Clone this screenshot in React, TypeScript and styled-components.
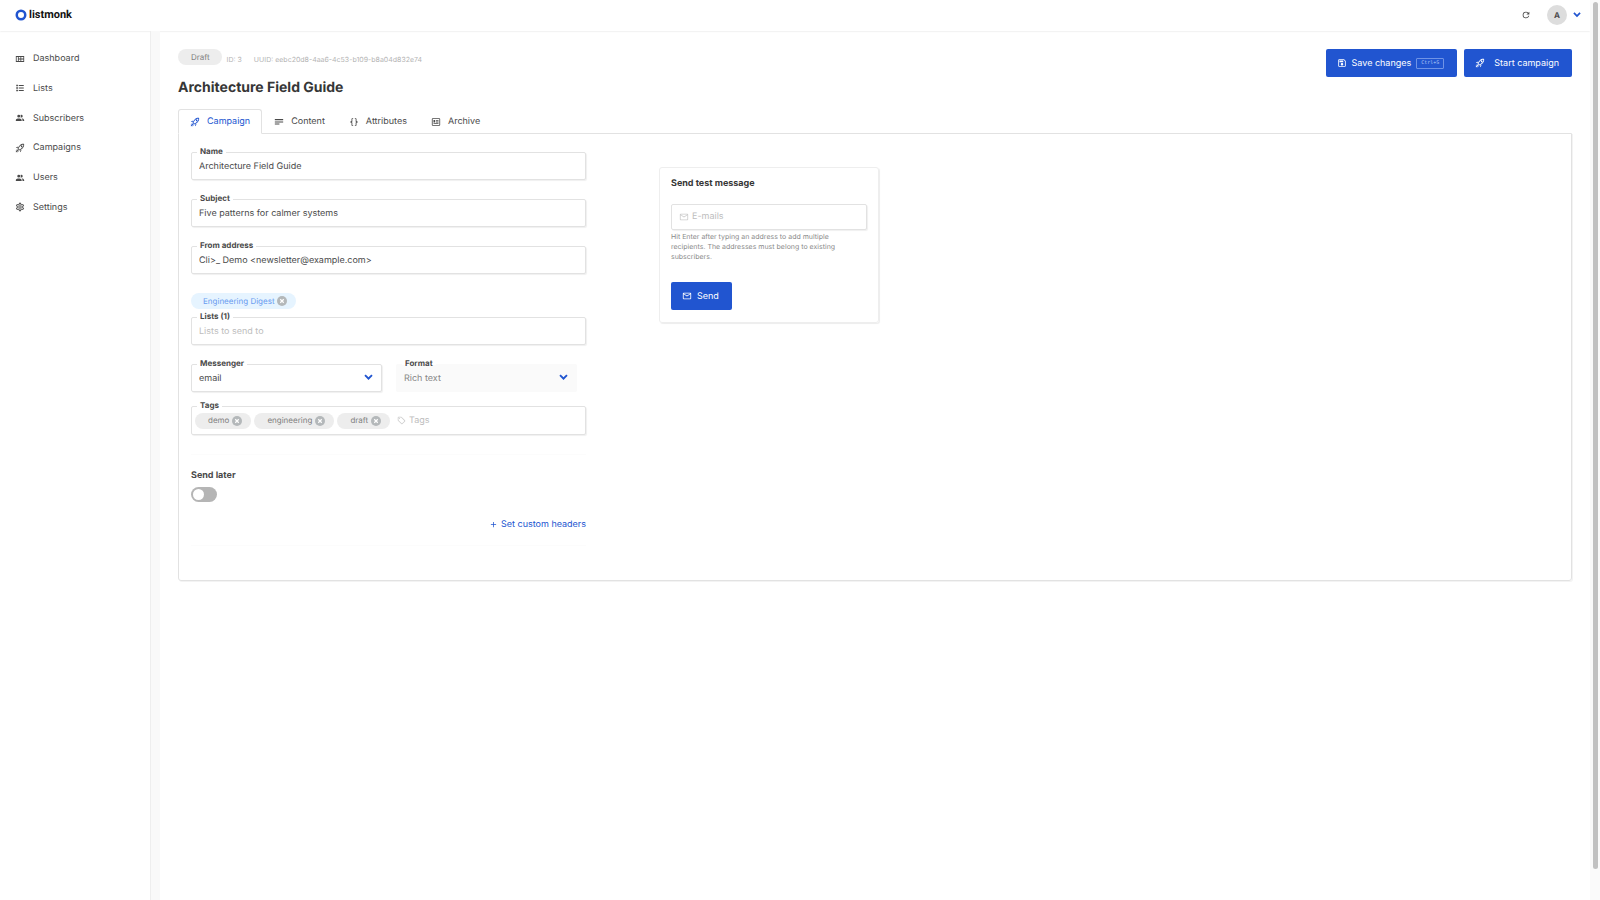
import React from 'react';
import styled, { createGlobalStyle, css } from 'styled-components';

const ICONS = {
  rocket:
    'M13.13 22.19L11.5 18.36C13.07 17.78 14.54 17 15.9 16.09L13.13 22.19M5.64 12.5L1.81 10.87L7.91 8.1C7 9.46 6.22 10.93 5.64 12.5M19.22 4C19.5 4 19.75 4 19.96 4.05C20.13 5.44 19.94 8.3 16.66 11.58C14.96 13.29 12.93 14.6 10.65 15.47L8.5 13.37C9.42 11.06 10.73 9.03 12.42 7.34C15.18 4.58 17.64 4 19.22 4M19.22 2C17.24 2 14.24 2.69 11 5.93C8.81 8.12 7.5 10.53 6.65 12.64C6.37 13.39 6.56 14.21 7.11 14.77L9.24 16.89C9.62 17.27 10.13 17.5 10.66 17.5C10.89 17.5 11.13 17.44 11.36 17.35C13.5 16.53 15.88 15.19 18.07 13C23.73 7.34 21.61 2.39 21.61 2.39S20.7 2 19.22 2M14.54 9.46C13.76 8.68 13.76 7.41 14.54 6.63S16.59 5.85 17.37 6.63C18.14 7.41 18.15 8.68 17.37 9.46C16.59 10.24 15.32 10.24 14.54 9.46M6.24 22L9.88 18.36C9.54 18.27 9.21 18.12 8.91 17.91L4.83 22H6.24M2 22H3.41L8.18 17.24L6.76 15.83L2 20.59V22M2 19.17L6.09 15.09C5.88 14.79 5.73 14.47 5.64 14.12L2 17.76V19.17Z',
  dashboard: 'M2 5v14h20V5H2zm5 12H4V7h3v10zm6 0H9v-4h4v4zm0-6H9V7h4v4zm7 6h-5v-4h5v4zm0-6h-5V7h5v4z',
  list: 'M3 4h4v4H3V4m6 1v2h12V5H9m-6 5h4v4H3v-4m6 1v2h12v-2H9m-6 5h4v4H3v-4m6 1v2h12v-2H9',
  people:
    'M16 17V19H2V17S2 13 9 13 16 17 16 17M12.5 7.5A3.5 3.5 0 1 0 9 11A3.5 3.5 0 0 0 12.5 7.5M15.94 13A5.32 5.32 0 0 1 18 17V19H22V17S22 13.37 15.94 13M15 4A3.39 3.39 0 0 0 13.07 4.59A5 5 0 0 1 13.07 10.41A3.39 3.39 0 0 0 15 11A3.5 3.5 0 0 0 15 4Z',
  cog:
    'M12,8A4,4 0 0,1 16,12A4,4 0 0,1 12,16A4,4 0 0,1 8,12A4,4 0 0,1 12,8M12,10A2,2 0 0,0 10,12A2,2 0 0,0 12,14A2,2 0 0,0 14,12A2,2 0 0,0 12,10M10,22C9.75,22 9.54,21.82 9.5,21.58L9.13,18.93C8.5,18.68 7.96,18.34 7.44,17.94L4.95,18.95C4.73,19.03 4.46,18.95 4.34,18.73L2.34,15.27C2.21,15.05 2.27,14.78 2.46,14.63L4.57,12.97L4.5,12L4.57,11L2.46,9.37C2.27,9.22 2.21,8.95 2.34,8.73L4.34,5.27C4.46,5.05 4.73,4.96 4.95,5.05L7.44,6.05C7.96,5.66 8.5,5.32 9.13,5.07L9.5,2.42C9.54,2.18 9.75,2 10,2H14C14.25,2 14.46,2.18 14.5,2.42L14.87,5.07C15.5,5.32 16.04,5.66 16.56,6.05L19.05,5.05C19.27,4.96 19.54,5.05 19.66,5.27L21.66,8.73C21.79,8.95 21.73,9.22 21.54,9.37L19.43,11L19.5,12L19.43,13L21.54,14.63C21.73,14.78 21.79,15.05 21.66,15.27L19.66,18.73C19.54,18.95 19.27,19.04 19.05,18.95L16.56,17.95C16.04,18.34 15.5,18.68 14.87,18.93L14.5,21.58C14.46,21.82 14.25,22 14,22H10M11.25,4L10.88,6.61C9.68,6.86 8.62,7.5 7.85,8.39L5.44,7.35L4.69,8.65L6.8,10.2C6.4,11.37 6.4,12.64 6.8,13.8L4.68,15.36L5.43,16.66L7.86,15.62C8.63,16.5 9.68,17.14 10.87,17.38L11.24,20H12.76L13.13,17.39C14.32,17.14 15.37,16.5 16.14,15.62L18.57,16.66L19.32,15.36L17.2,13.81C17.6,12.64 17.6,11.37 17.2,10.2L19.31,8.65L18.56,7.35L16.15,8.39C15.38,7.5 14.32,6.86 13.12,6.62L12.75,4H11.25Z',
  text: 'M2 5H22V8H2V5M2 10.5H22V13H2V10.5M2 15.5H13V18H2V15.5Z',
  braces:
    'M8 3A2 2 0 0 0 6 5V9A2 2 0 0 1 4 11H3V13H4A2 2 0 0 1 6 15V19A2 2 0 0 0 8 21H10V19H8V14A2 2 0 0 0 6 12A2 2 0 0 0 8 10V5H10V3M16 3A2 2 0 0 1 18 5V9A2 2 0 0 0 20 11H21V13H20A2 2 0 0 0 18 15V19A2 2 0 0 1 16 21H14V19H16V14A2 2 0 0 1 18 12A2 2 0 0 1 16 10V5H14V3H16Z',
  news:
    'M20 5V19H4V5H20M20 3H4C2.89 3 2 3.89 2 5V19C2 20.11 2.89 21 4 21H20C21.11 21 22 20.11 22 19V5C22 3.89 21.11 3 20 3M18 15H6V17H18V15M10 7H6V13H10V7M12 9H18V7H12V9M18 11H12V13H18V11Z',
  save:
    'M17 3H5C3.89 3 3 3.9 3 5V19C3 20.1 3.89 21 5 21H19C20.1 21 21 20.1 21 19V7L17 3M19 19H5V5H16.17L19 7.83V19M12 12C10.34 12 9 13.34 9 15S10.34 18 12 18 15 16.66 15 15 13.66 12 12 12M6 6H15V10H6V6Z',
  refresh:
    'M17.65 6.35C16.2 4.9 14.21 4 12 4A8 8 0 0 0 4 12A8 8 0 0 0 12 20C15.73 20 18.84 17.45 19.73 14H17.65C16.83 16.33 14.61 18 12 18A6 6 0 0 1 6 12A6 6 0 0 1 12 6C13.66 6 15.14 6.69 16.22 7.78L13 11H20V4L17.65 6.35Z',
  mail:
    'M22 6C22 4.9 21.1 4 20 4H4C2.9 4 2 4.9 2 6V18C2 19.1 2.9 20 4 20H20C21.1 20 22 19.1 22 18V6M20 6L12 11L4 6H20M20 18H4V8L12 13L20 8V18Z',
  tag:
    'M21.41 11.58L12.41 2.58A2 2 0 0 0 11 2H4A2 2 0 0 0 2 4V11A2 2 0 0 0 2.59 12.42L11.59 21.42A2 2 0 0 0 13 22A2 2 0 0 0 14.41 21.41L21.41 14.41A2 2 0 0 0 22 13A2 2 0 0 0 21.41 11.58M13 20L4 11V4H11L20 13M6.5 5A1.5 1.5 0 1 1 5 6.5A1.5 1.5 0 0 1 6.5 5Z',
  plus: 'M19 13H13V19H11V13H5V11H11V5H13V11H19V13Z',
  chevron: 'M1 7.5L4.5 4L12 11L19.5 4L23 7.5L12 18.5Z',
};

type IconName = keyof typeof ICONS;

const Svg = styled.svg<{ $size: number }>`
  width: ${(p) => p.$size}px;
  height: ${(p) => p.$size}px;
  flex: none;
  display: block;
  fill: currentColor;
`;

const Icon = ({ name, size = 10 }: { name: IconName; size?: number }) => (
  <Svg $size={size} viewBox="0 0 24 24" aria-hidden="true">
    <path d={ICONS[name]} />
  </Svg>
);

const BLUE = '#2155d0';
const BORDER = '#e2e2e2';

const GlobalStyle = createGlobalStyle`
  *, *::before, *::after { box-sizing: border-box; }
  body {
    margin: 0;
    background: #fff;
    color: #4a4a4a;
    font: 9px/15px Inter, "Liberation Sans", sans-serif;
    text-rendering: geometricPrecision;
  }
  button, input, select { font: inherit; color: inherit; text-rendering: inherit; }
  button { cursor: pointer; }
  a { color: inherit; text-decoration: none; }
`;

const Page = styled.div`
  display: grid;
  grid-template-columns: 1fr 10px;
  min-height: 100vh;
`;

const Shell = styled.div`
  display: flex;
  flex-direction: column;
`;

const Gutter = styled.div`
  display: flex;
  justify-content: center;
  padding-top: 2px;
  background: #fafafa;
`;

const Thumb = styled.div`
  width: 5px;
  height: calc(100vh - 33px);
  border-radius: 3px;
  background: #c1c1c1;
`;

const Header = styled.header`
  display: flex;
  align-items: center;
  justify-content: space-between;
  height: 31px;
  padding: 0 9px 1px 15px;
  box-shadow: 0 0 2px #d8d8d8;
`;

const Logo = styled.a`
  display: flex;
  align-items: center;
  gap: 2px;
  color: #111;
  font: 700 11px/16px Roboto, sans-serif;
`;

const HeaderTools = styled.div`
  display: flex;
  align-items: center;
`;

const PlainButton = styled.button`
  display: flex;
  align-items: center;
  padding: 0;
  border: 0;
  background: none;
`;

const UserButton = styled(PlainButton)`
  gap: 6px;
  margin-left: 16px;
  color: ${BLUE};
`;

const Avatar = styled.span`
  width: 20px;
  height: 20px;
  border-radius: 50%;
  background: #ddd;
  color: #4a4a4a;
  font-size: 8px;
  line-height: 20px;
  font-weight: 700;
  text-align: center;
`;

const Body = styled.div`
  display: flex;
  flex: 1;
`;

const Sidebar = styled.nav`
  width: 151px;
  flex: none;
  padding: 20px 15px;
  border-right: 1px solid #eee;
`;

const NavList = styled.div`
  display: flex;
  flex-direction: column;
  justify-content: space-between;
  height: 164px;
`;

const Strip = styled.div`
  width: 9px;
  flex: none;
  background: #f9f9f9;
`;

const NavLink = styled.a`
  display: flex;
  align-items: center;
  gap: 8px;
`;

const Main = styled.main`
  flex: 1;
  min-width: 0;
  padding: 18px;
`;

const TitleBar = styled.div`
  display: flex;
  justify-content: space-between;
  align-items: flex-start;
`;

const Meta = styled.p`
  display: flex;
  align-items: flex-start;
  height: 16px;
  margin: 0;
  color: #b5b5b5;
  font-size: 7px;
`;

const MetaItem = styled.span`
  margin: 3px 12px 0 0;
`;

const Status = styled.span`
  margin-right: 5px;
  padding: 0 12px 0 13px;
  border-radius: 8px;
  background: #ededed;
  color: #7f7f7f;
  font-size: 8px;
  line-height: 16px;
`;

const Title = styled.h1`
  margin: 12px 0 11px;
  color: #363636;
  font-size: 14px;
  line-height: 21px;
`;

const Actions = styled.div`
  display: flex;
  gap: 7px;
`;

const Button = styled.button<{ $gap?: number }>`
  display: flex;
  align-items: center;
  gap: ${(p) => p.$gap ?? 5}px;
  height: 28px;
  padding: 0 13px 0 11px;
  border: 0;
  border-radius: 2px;
  background: ${BLUE};
  color: #fff;
`;

const Kbd = styled.kbd`
  padding: 0 4px;
  border: 1px solid #6f93e6;
  border-radius: 1px;
  color: #b4c7f4;
  font: 5px/9px "DejaVu Sans Mono", monospace;
`;

const Tabs = styled.div`
  display: flex;
`;

const Tab = styled.button<{ $active?: boolean }>`
  display: flex;
  align-items: center;
  gap: 7px;
  height: 25px;
  margin-bottom: -1px;
  padding: 0 11px;
  border: 1px solid transparent;
  border-radius: 3px 3px 0 0;
  background: none;
  ${(p) =>
    p.$active &&
    css`
      border-color: ${BORDER};
      border-bottom-color: #fff;
      background: #fff;
      color: ${BLUE};
      z-index: 1;
    `}
`;

const Panel = styled.section`
  display: flex;
  align-items: flex-start;
  gap: 73px;
  padding: 18px 12px 34px;
  border: 1px solid ${BORDER};
  border-radius: 0 0 3px 3px;
  box-shadow: 1px 1px 0 #f3f3f3;
`;

const Form = styled.form`
  flex: 0 1 395px;
`;

const Field = styled.div<{ $gap?: number }>`
  position: relative;
  margin-bottom: ${(p) => p.$gap ?? 19}px;
`;

const FieldLabel = styled.label`
  position: absolute;
  z-index: 1;
  top: -7px;
  left: 6px;
  padding: 0 3px;
  background: linear-gradient(transparent 7px, #fff 7px 8px, transparent 8px);
  font-size: 8px;
  line-height: 13px;
  font-weight: 700;
`;

const control = css`
  width: 100%;
  height: 28px;
  border: 1px solid ${BORDER};
  border-radius: 2px;
  background: #fff;
  box-shadow: 1px 1px 1px #f0f0f0;
`;

const Input = styled.input`
  ${control}
  display: block;
  padding: 0 7px;
  &::placeholder { color: #bdbdbd; }
`;

const Pair = styled.div`
  display: grid;
  grid-template-columns: 191px 181px;
  gap: 14px;
`;

const SelectBox = styled.div`
  position: relative;
`;

const Select = styled.select`
  ${control}
  display: block;
  appearance: none;
  padding: 0 7px;
  opacity: 1;
  &:disabled {
    border-color: #fafafa;
    background: #fafafa;
    color: #888;
    box-shadow: none;
  }
`;

const Arrow = styled.span`
  position: absolute;
  top: 9px;
  right: 9px;
  color: ${BLUE};
  pointer-events: none;
`;

const Chips = styled.div`
  display: flex;
  margin: 0 0 8px;
`;

const Chip = styled.span<{ $blue?: boolean }>`
  display: flex;
  align-items: center;
  gap: ${(p) => (p.$blue ? 2 : 3)}px;
  height: 16px;
  padding: 0 9px 0 ${(p) => (p.$blue ? 12 : 13)}px;
  border-radius: 8px;
  background: ${(p) => (p.$blue ? '#e6f4ff' : '#ededed')};
  color: ${(p) => (p.$blue ? '#6a9cf0' : '#7f7f7f')};
  font-size: 8px;
  white-space: nowrap;
`;

const TagBox = styled.div`
  ${control}
  height: 29px;
  display: flex;
  align-items: center;
  gap: 3px;
  padding: 0 3px;
`;

const TagInput = styled.input`
  flex: 1;
  min-width: 0;
  padding: 0;
  border: 0;
  outline: 0;
  background: none;
  &::placeholder { color: #bdbdbd; }
`;

const Hint = styled.span`
  display: flex;
  padding-left: 4px;
  color: #ccc;
`;

const Rule = styled.hr`
  height: 1px;
  margin: 0;
  border: 0;
  background: #fcfcfc;
`;

const SendLater = styled.div`
  display: flex;
  flex-direction: column;
  align-items: flex-start;
  gap: 4px;
  padding-top: 13px;
  font-weight: 700;
`;

const Switch = styled.input`
  appearance: none;
  display: flex;
  align-items: center;
  width: 26px;
  height: 15px;
  margin: 0;
  padding: 0 2px;
  border-radius: 8px;
  background: #b5b5b5;
  &::before {
    content: '';
    width: 11px;
    height: 11px;
    border-radius: 50%;
    background: #fff;
  }
  &:checked { justify-content: flex-end; background: ${BLUE}; }
`;

const HeadersLink = styled.a`
  display: flex;
  align-items: center;
  justify-content: flex-end;
  gap: 3px;
  margin: 15px 0 13px;
  color: ${BLUE};
`;

const Card = styled.form`
  width: 220px;
  margin-top: 15px;
  padding: 8px 11px 12px;
  border: 1px solid #eee;
  border-radius: 3px;
  box-shadow: 1px 1px 1px #ededed;
`;

const CardTitle = styled.h2`
  margin: 0 0 13px;
  color: #363636;
  font-size: 9px;
  line-height: 15px;
`;

const EmailBox = styled.label`
  ${control}
  height: 26px;
  display: flex;
  align-items: center;
  gap: 3px;
  padding: 0 7px 1px;
  color: #ccc;
`;

const Help = styled.p`
  margin: 2px 0 20px;
  padding-right: 12px;
  color: #8a8a8a;
  font-size: 7px;
  line-height: 10px;
`;

const RemoveIcon = () => (
  <Svg $size={10} viewBox="0 0 20 20" aria-hidden="true">
    <circle cx="10" cy="10" r="10" fill="#b4b8ba" />
    <path d="M6.5 6.5L13.5 13.5M13.5 6.5L6.5 13.5" stroke="#fff" strokeWidth="2.4" />
  </Svg>
);

const LogoRing = () => (
  <Svg $size={12} viewBox="0 0 24 24" aria-hidden="true">
    <circle cx="12" cy="12" r="8.5" fill="none" stroke={BLUE} strokeWidth="5" />
  </Svg>
);

const Tag = ({ text, blue }: { text: string; blue?: boolean }) => (
  <Chip $blue={blue}>
    {text}
    <PlainButton type="button" aria-label={`Remove ${text}`}>
      <RemoveIcon />
    </PlainButton>
  </Chip>
);

const NAV: [IconName, string][] = [
  ['dashboard', 'Dashboard'],
  ['list', 'Lists'],
  ['people', 'Subscribers'],
  ['rocket', 'Campaigns'],
  ['people', 'Users'],
  ['cog', 'Settings'],
];

const TABS: [IconName, string][] = [
  ['rocket', 'Campaign'],
  ['text', 'Content'],
  ['braces', 'Attributes'],
  ['news', 'Archive'],
];

const TextField = ({ id, label, value, placeholder }: {
  id: string; label: string; value?: string; placeholder?: string;
}) => (
  <Field>
    <FieldLabel htmlFor={id}>{label}</FieldLabel>
    <Input id={id} defaultValue={value} placeholder={placeholder} />
  </Field>
);

export default function App() {
  return (
    <>
      <GlobalStyle />
      <Page>
        <Shell>
          <Header>
            <Logo href="#">
              <LogoRing />
              listmonk
            </Logo>
            <HeaderTools>
              <PlainButton aria-label="Refresh"><Icon name="refresh" /></PlainButton>
              <UserButton aria-label="Account">
                <Avatar>A</Avatar>
                <Icon name="chevron" size={8} />
              </UserButton>
            </HeaderTools>
          </Header>
          <Body>
            <Sidebar>
              <NavList>
                {NAV.map(([icon, text]) => (
                  <NavLink href="#" key={text}>
                    <Icon name={icon} />
                    {text}
                  </NavLink>
                ))}
              </NavList>
            </Sidebar>
            <Strip />
            <Main>
              <TitleBar>
                <div>
                  <Meta>
                    <Status>Draft</Status>
                    <MetaItem>ID: 3</MetaItem>
                    <MetaItem>UUID: eebc20d8-4aa6-4c53-b109-b8a04d832e74</MetaItem>
                  </Meta>
                  <Title>Architecture Field Guide</Title>
                </div>
                <Actions>
                  <Button type="button">
                    <Icon name="save" />
                    Save changes
                    <Kbd>Ctrl+S</Kbd>
                  </Button>
                  <Button type="button" $gap={9}>
                    <Icon name="rocket" />
                    Start campaign
                  </Button>
                </Actions>
              </TitleBar>
              <Tabs role="tablist">
                {TABS.map(([icon, text], i) => (
                  <Tab role="tab" type="button" aria-selected={i === 0} $active={i === 0} key={text}>
                    <Icon name={icon} />
                    {text}
                  </Tab>
                ))}
              </Tabs>
              <Panel>
                <Form>
                  <TextField id="name" label="Name" value="Architecture Field Guide" />
                  <TextField id="subject" label="Subject" value="Five patterns for calmer systems" />
                  <TextField id="from" label="From address" value="Cli>_ Demo <newsletter@example.com>" />
                  <Chips><Tag text="Engineering Digest" blue /></Chips>
                  <TextField id="lists" label="Lists (1)" placeholder="Lists to send to" />
                  <Pair>
                    <Field $gap={14}>
                      <FieldLabel htmlFor="messenger">Messenger</FieldLabel>
                      <SelectBox>
                        <Select id="messenger"><option>email</option></Select>
                        <Arrow><Icon name="chevron" size={9} /></Arrow>
                      </SelectBox>
                    </Field>
                    <Field $gap={14}>
                      <FieldLabel htmlFor="format">Format</FieldLabel>
                      <SelectBox>
                        <Select id="format" disabled><option>Rich text</option></Select>
                        <Arrow><Icon name="chevron" size={9} /></Arrow>
                      </SelectBox>
                    </Field>
                  </Pair>
                  <Field>
                    <FieldLabel htmlFor="tags">Tags</FieldLabel>
                    <TagBox>
                      <Tag text="demo" />
                      <Tag text="engineering" />
                      <Tag text="draft" />
                      <Hint><Icon name="tag" size={9} /></Hint>
                      <TagInput id="tags" placeholder="Tags" />
                    </TagBox>
                  </Field>
                  <Rule />
                  <SendLater>
                    <label htmlFor="later">Send later</label>
                    <Switch id="later" type="checkbox" role="switch" />
                  </SendLater>
                  <HeadersLink href="#"><Icon name="plus" size={9} />Set custom headers</HeadersLink>
                  <Rule />
                </Form>
                <Card>
                  <CardTitle>Send test message</CardTitle>
                  <EmailBox>
                    <Icon name="mail" />
                    <TagInput aria-label="E-mails" placeholder="E-mails" />
                  </EmailBox>
                  <Help>
                    Hit Enter after typing an address to add multiple recipients. The addresses must
                    belong to existing subscribers.
                  </Help>
                  <Button type="button"><Icon name="mail" />Send</Button>
                </Card>
              </Panel>
            </Main>
          </Body>
        </Shell>
        <Gutter><Thumb /></Gutter>
      </Page>
    </>
  );
}
